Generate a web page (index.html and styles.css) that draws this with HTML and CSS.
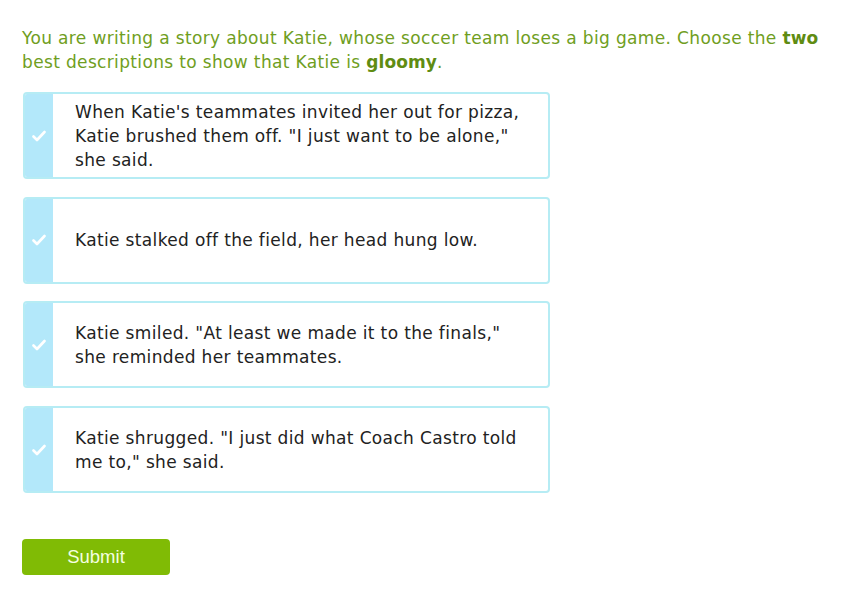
FILE: index.html
```html
<!DOCTYPE html>
<html>
<head>
<meta charset="utf-8">
<link rel="stylesheet" href="styles.css">
</head>
<body>
<div class="page">
  <p class="prompt">You are writing a story about Katie, whose soccer team loses a big game. Choose the <b>two</b> best descriptions to show that Katie is <b>gloomy</b>.</p>
  <div class="choices">
    <div class="choice">
      <div class="strip"><svg width="14" height="12" viewBox="0 0 14 12"><path d="M1.5 6.5 L5 10 L12.5 2" fill="none" stroke="#fff" stroke-width="2.6" stroke-linecap="round" stroke-linejoin="round"/></svg></div>
      <div class="text">When Katie's teammates invited her out for pizza, Katie brushed them off. "I just want to be alone," she said.</div>
    </div>
    <div class="choice">
      <div class="strip"><svg width="14" height="12" viewBox="0 0 14 12"><path d="M1.5 6.5 L5 10 L12.5 2" fill="none" stroke="#fff" stroke-width="2.6" stroke-linecap="round" stroke-linejoin="round"/></svg></div>
      <div class="text">Katie stalked off the field, her head hung low.</div>
    </div>
    <div class="choice">
      <div class="strip"><svg width="14" height="12" viewBox="0 0 14 12"><path d="M1.5 6.5 L5 10 L12.5 2" fill="none" stroke="#fff" stroke-width="2.6" stroke-linecap="round" stroke-linejoin="round"/></svg></div>
      <div class="text">Katie smiled. "At least we made it to the finals," she reminded her teammates.</div>
    </div>
    <div class="choice">
      <div class="strip"><svg width="14" height="12" viewBox="0 0 14 12"><path d="M1.5 6.5 L5 10 L12.5 2" fill="none" stroke="#fff" stroke-width="2.6" stroke-linecap="round" stroke-linejoin="round"/></svg></div>
      <div class="text">Katie shrugged. "I just did what Coach Castro told me to," she said.</div>
    </div>
  </div>
  <button class="submit">Submit</button>
</div>
</body>
</html>
```
FILE: styles.css
```css
html, body {
  margin: 0;
  padding: 0;
  background: #fff;
}
.page {
  padding: 26px 22px 0 22px;
  font-family: "DejaVu Sans", Verdana, sans-serif;
}
.prompt {
  margin: 0;
  color: #6f9e22;
  font-size: 17px;
  letter-spacing: 0.35px;
  line-height: 24px;
  width: 812px;
}
.prompt b {
  color: #5f8c12;
  letter-spacing: 0.1px;
}
.choices {
  margin-top: 18px;
  margin-left: 1px;
  display: flex;
  flex-direction: column;
  gap: 17.7px;
  width: 527px;
}
.choice {
  display: flex;
  min-height: 87px;
  box-sizing: border-box;
  border: 2px solid #b6ecf4;
  border-radius: 4px;
  background: #fff;
}
.strip {
  width: 28px;
  flex: none;
  background: #b3e8fa;
  display: flex;
  align-items: center;
  justify-content: center;
  border-radius: 2px 0 0 2px;
}
.text {
  flex: 1;
  display: flex;
  align-items: center;
  padding: 0 18px 0 22px;
  font-size: 17px;
  letter-spacing: 0.35px;
  line-height: 24px;
  color: #222;
}
.submit {
  margin-top: 46px;
  width: 148px;
  height: 36px;
  border: none;
  border-radius: 4px;
  background: #80bb05;
  color: #f4ffe0;
  font-family: "Liberation Sans", Arial, sans-serif;
  font-size: 18.5px;
  cursor: pointer;
}
```
